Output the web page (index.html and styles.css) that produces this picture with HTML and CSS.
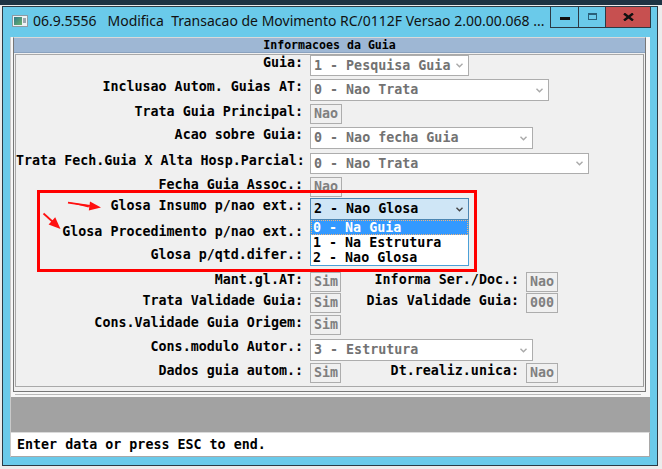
FILE: index.html
```html
<!DOCTYPE html>
<html>
	<head>
		<title>Modifica Transacao de Movimento</title>
		<meta charset="UTF-8">
		<link rel="stylesheet" href="styles.css">
	</head>
	<body>
		<div class="desk-top"></div>
		<div class="desk">
			<div class="window">
				<div class="titlebar">
					<svg class="app-icon" width="16" height="12" viewBox="0 0 16 12">
						<defs>
							<linearGradient id="iconfill" x1="0" y1="0" x2="1" y2="1">
								<stop offset="0" stop-color="#2f7a8c"/>
								<stop offset="1" stop-color="#6bb36a"/>
							</linearGradient>
						</defs>
						<rect x="0.5" y="0.5" width="15" height="11" fill="#eef2f4" stroke="#8e9ba4"/>
						<rect x="2" y="2" width="8" height="8" fill="url(#iconfill)"/>
						<rect x="11" y="3" width="3" height="5" fill="#9ba7af"/>
					</svg>
					<span class="title">06.9.5556   Modifica  Transacao de Movimento RC/0112F Versao 2.00.00.068 ...</span>
					<div class="caption-buttons">
						<div class="cap-btn cap-min"><span class="min-bar"></span></div>
						<div class="cap-btn cap-max"><span class="max-box"></span></div>
						<div class="cap-btn cap-close">
							<svg width="11" height="8" viewBox="0 0 11 8">
								<path d="M1 0.5 L10 7.5 M10 0.5 L1 7.5" stroke="#111" stroke-width="2.4" fill="none"/>
							</svg>
						</div>
					</div>
				</div>

				<div class="client">
					<div class="pane">
						<div class="pane-head">Informacoes da Guia</div>
						<div class="pane-body">
							<div class="form">
								<div class="row h24">
									<span class="lbl">Guia:</span>
									<span class="fld sel t21 w159">1 - Pesquisa Guia<svg class="chev" width="7" height="5" viewBox="0 0 7 5"><path d="M0.5 0.8 L3.5 3.8 L6.5 0.8" fill="none" stroke="#a9a9a9" stroke-width="1.4"/></svg></span>
								</div>
								<div class="row h25">
									<span class="lbl">Inclusao Autom. Guias AT:</span>
									<span class="fld sel t22 w239">0 - Nao Trata<svg class="chev" width="7" height="5" viewBox="0 0 7 5"><path d="M0.5 0.8 L3.5 3.8 L6.5 0.8" fill="none" stroke="#a9a9a9" stroke-width="1.4"/></svg></span>
								</div>
								<div class="row h23">
									<span class="lbl">Trata Guia Principal:</span>
									<span class="fld box t20 w32">Nao</span>
								</div>
								<div class="row h26">
									<span class="lbl">Acao sobre Guia:</span>
									<span class="fld sel t22 w223">0 - Nao fecha Guia<svg class="chev" width="7" height="5" viewBox="0 0 7 5"><path d="M0.5 0.8 L3.5 3.8 L6.5 0.8" fill="none" stroke="#a9a9a9" stroke-width="1.4"/></svg></span>
								</div>
								<div class="row h24">
									<span class="lbl">Trata Fech.Guia X Alta Hosp.Parcial:</span>
									<span class="fld sel t21 w279">0 - Nao Trata<svg class="chev" width="7" height="5" viewBox="0 0 7 5"><path d="M0.5 0.8 L3.5 3.8 L6.5 0.8" fill="none" stroke="#a9a9a9" stroke-width="1.4"/></svg></span>
								</div>
								<div class="row h21">
									<span class="lbl">Fecha Guia Assoc.:</span>
									<span class="fld box t20 w32">Nao</span>
								</div>
								<div class="row h26">
									<span class="lbl">Glosa Insumo p/nao ext.:</span>
									<span class="fld sel focus t22 w159">2 - Nao Glosa<svg class="chev" width="7" height="5" viewBox="0 0 7 5"><path d="M0.5 0.8 L3.5 3.8 L6.5 0.8" fill="none" stroke="#444" stroke-width="1.4"/></svg></span>
								</div>
								<div class="row h23">
									<span class="lbl">Glosa Procedimento p/nao ext.:</span>
								</div>
								<div class="row h25">
									<span class="lbl">Glosa p/qtd.difer.:</span>
								</div>
								<div class="row h21">
									<span class="lbl">Mant.gl.AT:</span>
									<span class="fld box t20 w31">Sim</span>
									<span class="lbl lbl-right">Informa Ser./Doc.:</span>
									<span class="fld box t20 w32">Nao</span>
								</div>
								<div class="row h22">
									<span class="lbl">Trata Validade Guia:</span>
									<span class="fld box t20 w31">Sim</span>
									<span class="lbl lbl-right">Dias Validade Guia:</span>
									<span class="fld box t20 w32">000</span>
								</div>
								<div class="row h24">
									<span class="lbl">Cons.Validade Guia Origem:</span>
									<span class="fld box t20 w31">Sim</span>
								</div>
								<div class="row h24">
									<span class="lbl">Cons.modulo Autor.:</span>
									<span class="fld sel t22 w223">3 - Estrutura<svg class="chev" width="7" height="5" viewBox="0 0 7 5"><path d="M0.5 0.8 L3.5 3.8 L6.5 0.8" fill="none" stroke="#a9a9a9" stroke-width="1.4"/></svg></span>
								</div>
								<div class="row h21">
									<span class="lbl">Dados guia autom.:</span>
									<span class="fld box t20 w31">Sim</span>
									<span class="lbl lbl-right">Dt.realiz.unica:</span>
									<span class="fld box t20 w32">Nao</span>
								</div>

								<!-- open list of the Glosa Insumo combo -->
								<div class="droplist">
									<div class="opt opt-on">0 - Na Guia</div>
									<div class="opt">1 - Na Estrutura</div>
									<div class="opt">2 - Nao Glosa</div>
								</div>

								<div class="callout"></div>
								<svg class="arrows" width="100" height="190" viewBox="0 0 100 190">
									<path d="M52 147.2 L73 150.3 L72.6 152.6 Z" fill="#ff1010"/>
									<line x1="52" y1="147.6" x2="74" y2="150.9" stroke="#ff1010" stroke-width="1.6"/>
									<polygon points="85,152.6 72.8,155.6 74,146.4" fill="#ff1010"/>
									<line x1="27.5" y1="158.5" x2="37" y2="167" stroke="#ff1010" stroke-width="1.8"/>
									<polygon points="44.5,174 32.6,169.5 39.2,162.2" fill="#ff1010"/>
								</svg>
							</div>
						</div>
					</div>
					<div class="pane-under"></div>
					<div class="grayband"></div>
					<div class="status">Enter data or press ESC to end.</div>
				</div>
			</div>
		</div>
	</body>
</html>
```

FILE: styles.css
```css
body {
	margin: 0;
	background: #ececec;
	font-family: "DejaVu Sans Mono", "Liberation Mono", monospace;
}

.desk-top {
	height: 5px;
	background: #1d3343;
}

.desk {
	padding: 1px 0 0 2px;
}

/* outer window frame */
.window {
	width: 654px;
	height: 458px;
	border: 1px solid #2b3a45;
	background: #6acaea;
	display: flex;
	flex-direction: column;
}

.titlebar {
	height: 30px;
	display: flex;
	align-items: flex-start;
	flex-shrink: 0;
}

.app-icon {
	margin: 8px 5px 0 9px;
	flex-shrink: 0;
}

.title {
	font-family: "Noto Sans", "Open Sans", sans-serif;
	font-size: 14px;
	line-height: 19px;
	margin-top: 4px;
	color: #111;
	white-space: pre;
	flex: 1;
	overflow: hidden;
}

.caption-buttons {
	display: flex;
	margin: -1px 6px 0 0;
	border-left: 1px solid #2b3a45;
}

.cap-btn {
	height: 20px;
	border: 1px solid #2b3a45;
	border-left: none;
	display: flex;
	align-items: center;
	justify-content: center;
}

.cap-min {
	width: 27px;
}

.cap-max {
	width: 26px;
}

.cap-close {
	width: 44px;
	background: #c75050;
}

.min-bar {
	width: 10px;
	height: 3px;
	margin-top: 2px;
	background: #111;
}

.max-box {
	width: 7px;
	height: 4px;
	border: 1px solid #2a5f78;
	border-top-width: 2px;
	margin-top: -2px;
}

/* client area */
.client {
	margin: 0 7px 8px 7px;
	height: 420px;
	background: #f7f7f7;
	border-left: 1px solid #c9c9c9;
	display: flex;
	flex-direction: column;
}

.pane {
	width: 631px;
	height: 353px;
	margin-left: 2px;
	border: 1px solid #777;
	border-top-color: #d9d9d9;
	display: flex;
	flex-direction: column;
}

.pane-head {
	height: 14px;
	background: #9eb7d4;
	font-size: 11.6px;
	font-weight: bold;
	line-height: 14px;
	text-align: center;
	color: #000;
	border-bottom: 1px solid #8aa2bf;
}

.pane-body {
	flex: 1;
	background: #f0f0f0;
	padding: 1px 1px 3px 1px;
}

.form {
	position: relative;
	height: 331px;
	border: 1px solid #a9a9a9;
	border-right-color: #9a9a9a;
}

.row {
	display: flex;
	align-items: flex-start;
}

.h21 { height: 21px; }
.h22 { height: 22px; }
.h23 { height: 23px; }
.h24 { height: 24px; }
.h25 { height: 25px; }
.h26 { height: 26px; }

.lbl {
	width: 287px;
	flex-shrink: 0;
	text-align: right;
	white-space: pre;
	font-size: 13.33px;
	font-weight: bold;
	line-height: 16px;
	color: #000;
}

.lbl-right {
	width: 178px;
}

.fld {
	box-sizing: border-box;
	margin-left: 7px;
	padding-left: 3px;
	border: 1px solid #adadad;
	font-size: 13.33px;
	font-weight: bold;
	color: #727272;
	white-space: pre;
	display: flex;
	align-items: center;
	justify-content: space-between;
	flex-shrink: 0;
}

.lbl + .fld {
	margin-left: 7px;
}

.sel {
	background: #fff;
}

.box {
	background: #f0f0f0;
	color: #808080;
}

.focus {
	background: #cfe6f6;
	border-color: #4b86b3;
	color: #000;
}

.chev {
	margin-right: 5px;
}

.t20 { height: 20px; line-height: 18px; }
.t21 { height: 21px; line-height: 19px; }
.t22 { height: 22px; line-height: 20px; }

.w31 { width: 31px; }
.w32 { width: 32px; }
.w159 { width: 159px; }
.w223 { width: 223px; }
.w239 { width: 239px; }
.w279 { width: 279px; }

.droplist {
	position: absolute;
	left: 294px;
	top: 165px;
	width: 159px;
	box-sizing: border-box;
	border: 1px solid #4ba0d8;
	border-top: none;
	background: #fff;
	z-index: 2;
}

.opt {
	height: 15px;
	line-height: 15px;
	padding-left: 2px;
	font-size: 13.33px;
	font-weight: bold;
	color: #000;
	white-space: pre;
}

.opt-on {
	background: #3399ff;
	color: #fff;
	outline: 1px dotted #f2b57c;
	outline-offset: -1px;
}

.callout {
	position: absolute;
	left: 21px;
	top: 135px;
	width: 440px;
	height: 82px;
	box-sizing: border-box;
	border: 3px solid #ff0000;
	z-index: 3;
}

.arrows {
	position: absolute;
	left: 0;
	top: 0;
	z-index: 3;
}

.pane-under {
	height: 1px;
	margin: 2px 9px 0 4px;
	background: #b9b9b9;
}

.grayband {
	height: 35px;
	margin-top: 2px;
	background: #a2a2a2;
}

.status {
	box-sizing: border-box;
	height: 25px;
	background: #fff;
	border-top: 1px solid #dadada;
	border-right: 1px solid #a8a8a8;
	border-bottom: 1px solid #a8a8a8;
	padding-left: 6px;
	font-size: 13.33px;
	font-weight: bold;
	line-height: 23px;
	color: #000;
	white-space: pre;
}
```
